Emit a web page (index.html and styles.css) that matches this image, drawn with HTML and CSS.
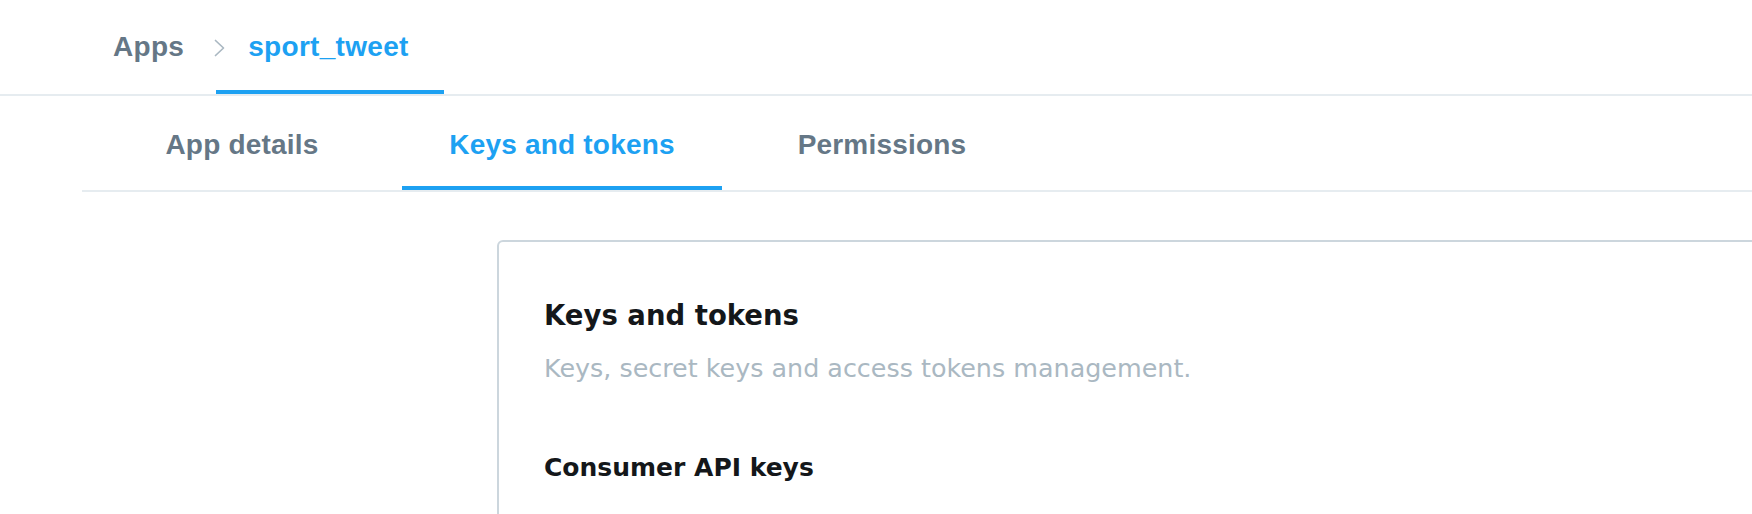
FILE: index.html
```html
<!DOCTYPE html>
<html lang="en">
<head>
<meta charset="utf-8">
<title>sport_tweet - Keys and tokens</title>
<link rel="stylesheet" href="styles.css">
</head>
<body>
<nav class="crumbs">
  <a class="crumb-link">Apps</a>
  <svg class="crumb-sep" width="11" height="18" viewBox="0 0 11 18" aria-hidden="true"><polyline points="1.5,1.5 9.5,9 1.5,16.5" fill="none" stroke="#aab8c2" stroke-width="1.7" stroke-linecap="round" stroke-linejoin="round"/></svg>
  <a class="crumb-tab">sport_tweet</a>
</nav>
<div class="tabs">
  <a class="tab">App details</a>
  <a class="tab tab-active">Keys and tokens</a>
  <a class="tab">Permissions</a>
</div>
<section class="card">
  <h1 class="card-title">Keys and tokens</h1>
  <p class="card-sub">Keys, secret keys and access tokens management.</p>
  <h2 class="card-section">Consumer API keys</h2>
</section>
</body>
</html>
```
FILE: styles.css
```css
html, body {
  margin: 0;
  padding: 0;
  background: #ffffff;
}
body {
  overflow: hidden;
  width: 1752px;
  height: 514px;
  font-family: "Liberation Sans", Arial, sans-serif;
}
a { text-decoration: none; cursor: pointer; }

.crumbs {
  display: flex;
  align-items: flex-start;
  padding-left: 113px;
  height: 94px;
  border-bottom: 2px solid #e6ecf0;
  font-size: 28px;
  font-weight: bold;
  line-height: 32px;
  letter-spacing: 0.3px;
}
.crumb-link {
  color: #657786;
  padding-top: 31px;
}
.crumb-sep {
  flex: none;
  margin-top: 39px;
  margin-left: 30px;
}
.crumb-tab {
  color: #1da1f2;
  margin-left: -9px;
  padding: 31px 35px 27px 32px;
  border-bottom: 4px solid #1da1f2;
}

.tabs {
  display: flex;
  margin-left: 82px;
  border-bottom: 2px solid #e6ecf0;
  font-size: 28px;
  font-weight: bold;
  line-height: 32px;
  letter-spacing: 0.2px;
}
.tab {
  width: 320px;
  text-align: center;
  color: #657786;
  padding: 33px 0 25px;
  border-bottom: 4px solid transparent;
}
.tab-active {
  color: #1da1f2;
  border-bottom-color: #1da1f2;
}

.card {
  margin: 48px -40px 0 497px;
  min-height: 400px;
  border: 2px solid #ccd6dd;
  border-radius: 6px;
  padding: 57px 45px 0;
  font-family: "DejaVu Sans", sans-serif;
}
.card-title {
  margin: 0;
  font-size: 27.5px;
  line-height: 32px;
  font-weight: bold;
  color: #14171a;
}
.card-sub {
  margin: 22px 0 0;
  font-size: 25.4px;
  line-height: 30px;
  color: #aab8c2;
}
.card-section {
  margin: 70px 0 0;
  font-size: 25px;
  line-height: 30px;
  font-weight: bold;
  color: #14171a;
}
```
